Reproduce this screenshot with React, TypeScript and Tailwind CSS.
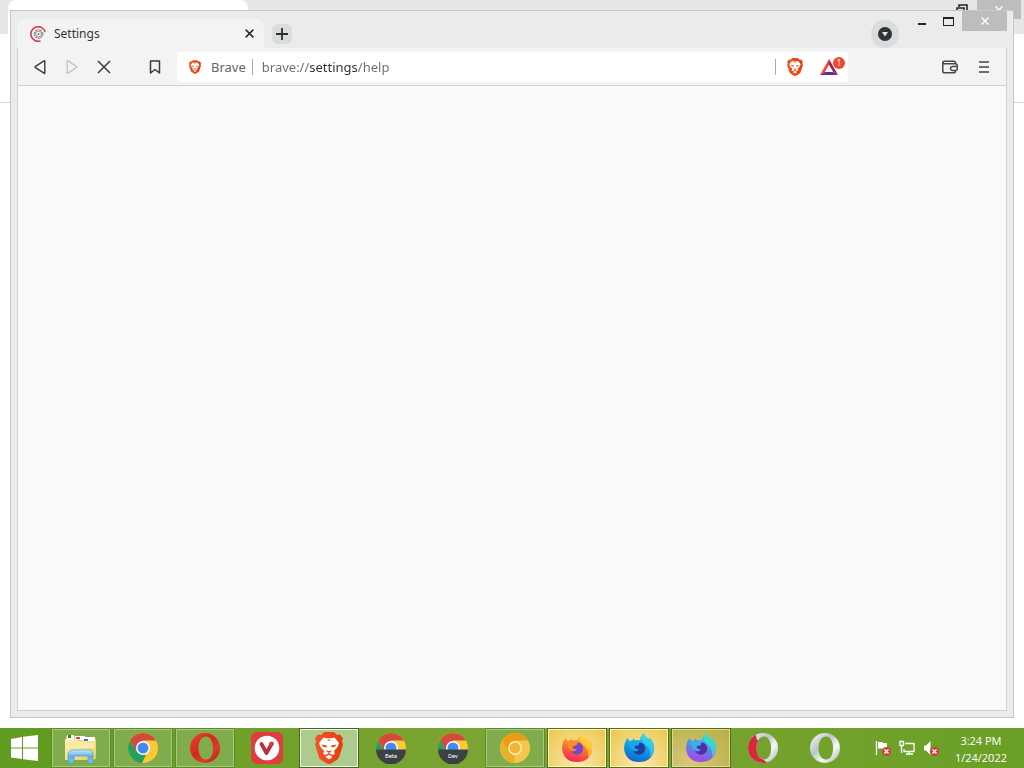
import type { ReactNode } from "react";

const BraveLion = ({ className }: { className: string }) => (
  <svg viewBox="0 0 28 32" className={className} aria-hidden="true">
    <defs>
      <linearGradient id="lion" x1="0" x2="1">
        <stop offset="0" stopColor="#f4552a" />
        <stop offset="1" stopColor="#e63d09" />
      </linearGradient>
    </defs>
    <path fill="url(#lion)" d="M9 0h10l3 3 3-.5 3 4-1 3 1 3-4 13q-1 2-3 3l-5 3q-2 1-4 0l-5-3q-2-1-3-3L0 12.500l1-3-1-3 3-4 3 .5z" />
    <path fill="#fff" d="M8.500 5.500l3 .7h5l3-.7 4.500 5.500-1.500 4-3.500 4 .8 3-2.300 1-3.500-2-3.500 2-2.300-1 .8-3-3.500-4-1.500-4z" />
    <path fill="#ee4a1a" d="M6.500 12.500l5.500 1-.5 2-3.500-.7zM21.500 12.500l-5.500 1 .5 2 3.500-.7zM12 7.500h4l-2 1.500zM11 18.300l3 .8 3-.8-1.500 2-1.500.8-1.500-.8z" />
    <path fill="#fff" d="M10.500 24.800l3.500-2 3.500 2-3.500 2.700z" />
  </svg>
);

const Bat = () => (
  <svg viewBox="0 0 18 16" className="h-4 w-[18px]" aria-hidden="true">
    <path fill="#ff4724" d="M9 0L0 16l5-3 4-7z" />
    <path fill="#9e1f63" d="M9 0l9 16-5-3-4-7z" />
    <path fill="#662d91" d="M0 16h18l-5-3H5z" />
    <path fill="#fff" d="M9 6l-4 7h8z" />
  </svg>
);

const SettingsLoading = () => (
  <svg viewBox="0 0 16 16" className="size-4 shrink-0" fill="none" aria-hidden="true">
    <path d="M10.500 15A7.300 7.300 0 1 1 15.200 6" stroke="#dc3553" strokeWidth="1.600" />
    <circle cx="8.500" cy="8" r="4.300" stroke="#858585" strokeWidth="1.300" strokeDasharray="1.700 1" />
    <circle cx="8.500" cy="8" r="3" stroke="#8d8d8d" />
    <circle cx="8.500" cy="8" r="1" fill="#777" />
  </svg>
);

const BackArrow = () => (
  <svg viewBox="0 0 16 16" className="size-4" fill="none" stroke="currentColor" strokeWidth="1.400" strokeLinejoin="round" aria-hidden="true">
    <path d="M12.800 2v12Q12.800 15 12 14.200L3.500 8.700Q2.700 8 3.500 7.300L12 1.800Q12.800 1.300 12.800 2z" />
  </svg>
);

const Cross = ({ className, w }: { className: string; w: number }) => (
  <svg viewBox="0 0 14 14" className={className} stroke="currentColor" strokeWidth={w} fill="none" aria-hidden="true">
    <path d="M1 1l12 12M13 1L1 13" />
  </svg>
);

const Wallet = () => (
  <svg viewBox="0 0 16 14" className="h-[14px] w-4" fill="none" stroke="#484848" strokeWidth="1.500" strokeLinejoin="round" aria-hidden="true">
    <path d="M13.500 3.800V3q0-1.800-1.800-1.800H2Q.8 1.200.8 2.500V11q0 1.800 1.700 1.800h9.200q1.800 0 1.800-1.800M1 2.500q.3 1.300 1.500 1.300h10.700q2 0 2 2v3.400q0 1.300-1.300 1.300h-3.500q-2-.3-2-2t2-2h4.500" />
  </svg>
);

const Explorer = () => (
  <svg viewBox="0 0 36 32" className="h-8 w-9" aria-hidden="true">
    <defs>
      <linearGradient id="folder" x1="0" y1="0" x2="1" y2="1">
        <stop stopColor="#fff4bd" />
        <stop offset="1" stopColor="#e9cb63" />
      </linearGradient>
      <linearGradient id="stand" x1="0" y1="0" x2="0" y2="1">
        <stop stopColor="#c4ebfb" />
        <stop offset=".5" stopColor="#58b0e5" />
        <stop offset="1" stopColor="#7ac6ec" />
      </linearGradient>
    </defs>
    <path fill="#e0c774" d="M3 4h11l2 3h17v20H3z" />
    <path fill="#fff" d="M4 3h7v4H4zM12 4h10v4H12zM22 5h10v4H22z" />
    <path fill="#268b38" d="M5 3h3v3H5z" />
    <path fill="#d64835" d="M13 5h4v2h-4z" />
    <path fill="#3976c9" d="M21 7h4v2h-4z" />
    <path fill="url(#folder)" d="M2 7h10l3 2h18v16l-2 3H2z" />
    <path fill="#f9eaa4" d="M2 11h29v5H2z" />
    <path fill="url(#stand)" stroke="#3f93ca" strokeWidth=".6" d="M8 18h20l2 3v10h-5v-7H11v7H5V21z" />
  </svg>
);

const ChromeFace = () => (
  <>
    <circle cx="16" cy="16" r="15" fill="#fbc934" />
    <path fill="#d44a3c" d="M3 8.500a15 15 0 0 1 26 0H16v4L9.500 19.800z" />
    <path fill="#23a05a" d="M3 8.500l6.500 11.200 9.500 3L15 31A15 15 0 0 1 3 8.500z" />
    <circle cx="16" cy="16" r="7" fill="#fff" />
    <circle cx="16" cy="16" r="5.500" fill="#4587f3" />
  </>
);

const Chrome = ({ label }: { label?: string }) => (
  <svg viewBox="0 0 32 32" className="size-8" aria-hidden="true">
    <ChromeFace />
    {label && (
      <>
        <path fill="#3c4146" d="M1 17.500h30a15 15 0 0 1-30 0z" />
        <text x="16" y="26" textAnchor="middle" fontSize="6" fill="#fff" fontFamily="Roboto, sans-serif">{label}</text>
      </>
    )}
  </svg>
);

const Canary = () => (
  <svg viewBox="0 0 32 32" className="size-8" aria-hidden="true">
    <circle cx="16" cy="16" r="15" fill="#f6c74c" />
    <path fill="#ed9c12" d="M3 8.500a15 15 0 0 1 26 0H16l-6.500 11z" />
    <path fill="#e9b02a" d="M3 8.500l6.500 11.200L16 23l-1 8A15 15 0 0 1 3 8.500z" />
    <circle cx="16" cy="16" r="6.200" fill="#f0b334" stroke="#fff0ba" strokeWidth="1.500" />
  </svg>
);

const OperaRing = ({ kind }: { kind: "red" | "developer" | "beta" }) => (
  <svg viewBox="0 0 32 32" className="size-8" aria-hidden="true">
    <defs>
      <linearGradient id="operaRed" x1="0" y1="0" x2="1" y2="1">
        <stop stopColor="#ee4438" />
        <stop offset=".45" stopColor="#d3271f" />
        <stop offset=".7" stopColor="#e03a2f" />
        <stop offset="1" stopColor="#a61410" />
      </linearGradient>
      <linearGradient id="operaSilver" x1="0" x2="1" y2="1">
        <stop stopColor="#fafafa" />
        <stop offset=".4" stopColor="#b9c5c8" />
        <stop offset=".65" stopColor="#f7f8f8" />
        <stop offset="1" stopColor="#9fadb0" />
      </linearGradient>
      <clipPath id="operaHalf">
        <path d="M0 0h8l2 8h6L12 24l10 8H0z" />
      </clipPath>
    </defs>
    <path
      fillRule="evenodd"
      fill={kind === "red" ? "url(#operaRed)" : "url(#operaSilver)"}
      d="M16 1a15 15 0 1 1 0 30a15 15 0 1 1 0-30zM17 4.500C7 4.500 7 27.500 17 27.500S26 4.500 17 4.500z"
    />
    {kind === "developer" && (
      <path
        fillRule="evenodd"
        fill="#d8293a"
        clipPath="url(#operaHalf)"
        d="M16 1a15 15 0 1 1 0 30a15 15 0 1 1 0-30zM17 4.500C7 4.500 7 27.500 17 27.500S26 4.500 17 4.500z"
      />
    )}
  </svg>
);

const Vivaldi = () => (
  <svg viewBox="0 0 32 32" className="size-8" aria-hidden="true">
    <rect width="32" height="32" rx="6" fill="#e03c3d" />
    <circle cx="16" cy="16" r="12.300" fill="#fff" />
    <path d="M10.500 12l5 9 5-9" stroke="#b93040" strokeWidth="3.800" fill="none" strokeLinecap="round" strokeLinejoin="round" />
    <circle cx="20.500" cy="11.800" r="2.400" fill="#dc3b3e" />
  </svg>
);

const foxes = {
  release: { id: "foxRelease", top: "#ffd23f", mid: "#ff7a2b", end: "#ef295d", tail: "#ffdf3d", core: "#7448cf", brow: "#ff8a26" },
  developer: { id: "foxDeveloper", top: "#20d7f5", mid: "#109ee7", end: "#1269cd", tail: "#45d5ef", core: "#253c9e", brow: "#16a9ea" },
  nightly: { id: "foxNightly", top: "#22d9e7", mid: "#538bed", end: "#aa43e5", tail: "#3de9ca", core: "#532da8", brow: "#3aaeea" },
};

const Firefox = ({ kind }: { kind: keyof typeof foxes }) => {
  const c = foxes[kind];
  return (
    <svg viewBox="0 0 32 32" className="size-8" aria-hidden="true">
      <defs>
        <linearGradient id={c.id} x1=".7" y1="0" x2=".4" y2="1">
          <stop stopColor={c.top} />
          <stop offset=".5" stopColor={c.mid} />
          <stop offset="1" stopColor={c.end} />
        </linearGradient>
      </defs>
      <path fill={`url(#${c.id})`} d="M4.500 6l2 3 3-1L11 6l1 3 5-1q0-4 4-7 1 4 5 6l1-1q5 6 4 12-2 12-15 12T1 17Q1 11 4.500 6z" />
      <path fill={c.tail} d="M21 1q1 4 5 6l1-1q5 6 4 12-1 5-4 7 1-7-3-11-6-5-6-9 1-3 3-4z" opacity=".65" />
      <circle cx="16" cy="16.500" r="6.200" fill={c.core} />
      <path fill={c.brow} d="M5 10l7-1.500q5-1 7 2.500-2-1-3 0 1 3-4 3-1 1 0 2 2 2 4 1-1 3-5 2-4-2-6-9z" />
    </svg>
  );
};

const ErrorBadge = () => (
  <g>
    <circle cx="11.500" cy="11.500" r="4.500" fill="#d23c36" />
    <path d="M9.500 9.500l4 4m0-4l-4 4" stroke="#fff" strokeWidth="1.500" />
  </g>
);

type Look = "idle" | "open" | "active" | "alert" | "mixed";
const looks: Record<Look, string> = {
  idle: "border-transparent",
  open: "border-[#a6ca82] bg-[#80ac4c] outline outline-[#5c8c26]",
  active: "border-[#f2f8e8] bg-[#adcb8d] outline outline-[#46661f]",
  alert: "border-[#fff6b8] bg-radial-[at_50%_100%] from-[#ffe9b0] to-[#e9c850] outline outline-[#5b6a1c]",
  mixed: "border-[#dfdc8a] bg-radial-[at_30%_100%] from-[#dcc680] to-[#b6b043] outline outline-[#5b6a1c]",
};

const apps: { name: string; look: Look; icon: ReactNode }[] = [
  { name: "File Explorer", look: "open", icon: <Explorer /> },
  { name: "Google Chrome", look: "open", icon: <Chrome /> },
  { name: "Opera", look: "open", icon: <OperaRing kind="red" /> },
  { name: "Vivaldi", look: "idle", icon: <Vivaldi /> },
  { name: "Brave", look: "active", icon: <BraveLion className="h-8 w-7" /> },
  { name: "Chrome Beta", look: "idle", icon: <Chrome label="Beta" /> },
  { name: "Chrome Dev", look: "idle", icon: <Chrome label="Dev" /> },
  { name: "Chrome Canary", look: "open", icon: <Canary /> },
  { name: "Firefox", look: "alert", icon: <Firefox kind="release" /> },
  { name: "Firefox Developer Edition", look: "alert", icon: <Firefox kind="developer" /> },
  { name: "Firefox Nightly", look: "mixed", icon: <Firefox kind="nightly" /> },
  { name: "Opera Developer", look: "idle", icon: <OperaRing kind="developer" /> },
  { name: "Opera Beta", look: "idle", icon: <OperaRing kind="beta" /> },
];

const BackWindow = () => (
  <div className="absolute inset-0 flex flex-col bg-white" aria-hidden="true">
    <div className="flex h-[34px] justify-between bg-[#e6e6e6]">
      <div className="ml-2 h-full w-60 rounded-t-lg bg-white" />
      <div className="flex">
        <svg viewBox="0 0 12 12" className="mt-1 mr-[9px] size-3" fill="none" stroke="#222" strokeWidth="1.500">
          <path d="M3 3V1h8v7H9M1 4h7v7H1z" />
        </svg>
        <div className="mr-[3px] flex h-[19px] w-11 items-center justify-center bg-[#bdbdbd] text-white">
          <Cross className="size-2" w={2.4} />
        </div>
      </div>
    </div>
    <div className="h-[69px] border-b border-[#d6d6d6]" />
  </div>
);

const BrowserWindow = () => (
  <div className="relative flex flex-1 flex-col border border-[#c6c6c6] bg-[#ebebeb] px-[6px] pb-[6px]">
    <header className="flex h-[37px] items-start">
      <div className="mt-2 flex h-[29px] w-[247px] items-center rounded-t-lg bg-[#f3f3f3] pr-[7px] pl-[13px]">
        <SettingsLoading />
        <span className="ml-2 flex-1 text-[12px] text-[#333]">Settings</span>
        <button aria-label="Close tab" className="flex size-4 items-center justify-center text-[#2c2c2c]">
          <Cross className="size-[9px]" w={2.4} />
        </button>
      </div>
      <button aria-label="New tab" className="mt-[13px] ml-2 flex size-5 items-center justify-center rounded-md bg-[#d9dcdc]">
        <svg viewBox="0 0 12 12" className="size-3" stroke="#2c2c2c" strokeWidth="1.800" aria-hidden="true">
          <path d="M6 0v12M0 6h12" />
        </svg>
      </button>
      <div className="ml-auto flex">
        <button aria-label="Search tabs" className="mt-[9px] flex size-7 items-center justify-center rounded-full bg-[#d9dcdd]">
          <svg viewBox="0 0 14 14" className="size-[14px]" aria-hidden="true">
            <circle cx="7" cy="7" r="7" fill="#303436" />
            <path d="M4 5h6L7 9.500z" fill="#e5e8e8" />
          </svg>
        </button>
        <div className="flex h-5">
          <button aria-label="Minimize" className="ml-[9px] flex w-[27px] items-center justify-center">
            <span className="mt-[5px] h-[2px] w-2 bg-[#222]" />
          </button>
          <button aria-label="Maximize" className="flex w-[27px] items-center justify-center">
            <span className="h-[9px] w-[11px] border border-t-2 border-[#222]" />
          </button>
          <button aria-label="Close" className="flex w-[45px] items-center justify-center bg-[#bdbdbd] text-white">
            <Cross className="size-2" w={2.4} />
          </button>
        </div>
      </div>
    </header>
    <div className="flex flex-1 flex-col border border-t-0 border-[#d0d0d0]">
      <nav className="flex h-[38px] items-center border-b border-[#cfd2d4] bg-[#f3f3f3] text-[#3c3c3c]">
        <button aria-label="Back" className="ml-[14px]"><BackArrow /></button>
        <button aria-label="Forward" disabled className="ml-4 rotate-180 text-[#c6c6c6]"><BackArrow /></button>
        <button aria-label="Stop" className="ml-[17px]"><Cross className="size-[14px]" w={1.5} /></button>
        <button aria-label="Bookmark" className="ml-[38px]">
          <svg viewBox="0 0 12 14" className="h-[14px] w-3" fill="none" stroke="currentColor" strokeWidth="1.500" strokeLinejoin="round" aria-hidden="true">
            <path d="M1.500 1h9v12L6 9.500 1.500 13z" />
          </svg>
        </button>
        <div className="ml-4 flex h-[30px] flex-1 items-center rounded bg-white pr-[3px] pl-3">
          <BraveLion className="h-[14px] w-3" />
          <label htmlFor="address" className="ml-[10px] pt-[2px] text-[13px] text-[#666]">Brave</label>
          <span className="ml-[6px] h-4 w-px bg-[#a8a8a8]" />
          <input
            id="address"
            defaultValue="brave://settings/help"
            className="ml-[9px] min-w-0 flex-1 bg-[linear-gradient(90deg,#6c6c6c_48px,#2f2f2f_48px,#2f2f2f_96px,#6c6c6c_96px)] bg-clip-text pt-[2px] text-[13px] text-transparent caret-[#333] outline-none"
          />
          <span className="h-4 w-px bg-[#a8a8a8]" />
          <button aria-label="Brave Shields" className="ml-[11px]"><BraveLion className="h-[18px] w-4" /></button>
          <button aria-label="Brave Rewards" className="relative mr-[7px] ml-[17px]">
            <Bat />
            <span className="absolute -top-[2px] -right-[7px] flex size-3 items-center justify-center rounded-full bg-[#f5472f] text-[8px] text-white">1</span>
          </button>
        </div>
        <button aria-label="Wallet" className="ml-[94px]"><Wallet /></button>
        <button aria-label="Menu" className="mr-[17px] ml-[21px]">
          <svg viewBox="0 0 10 12" className="h-3 w-[10px]" stroke="#454545" strokeWidth="1.500" aria-hidden="true">
            <path d="M0 1h10M0 6h10M0 11h10" />
          </svg>
        </button>
      </nav>
      <main className="flex-1 bg-[#f9fafc]" />
    </div>
  </div>
);

const Taskbar = () => (
  <footer className="flex h-10 items-center bg-linear-to-r from-[#5f9c20] via-[#7ea534] to-[#6a9f25] text-white">
    <button aria-label="Start" className="mr-1 flex h-full w-12 items-center justify-center">
      <svg viewBox="0 0 27 26" className="h-[26px] w-[27px]" fill="#fff" aria-hidden="true">
        <path d="M0 4l11-2v10.500H0zM12 1.800L27 0v12.500H12zM0 13.500h11V24L0 22.500zM12 13.500h15V26l-15-1.800z" />
      </svg>
    </button>
    <div className="flex h-full items-center gap-1 py-px">
      {apps.map((app) => (
        <button key={app.name} aria-label={app.name} className={`flex h-full w-[58px] items-center justify-center border ${looks[app.look]}`}>
          {app.icon}
        </button>
      ))}
    </div>
    <div className="ml-auto flex items-center gap-2 pr-[17px]">
      <button aria-label="Action Center">
        <svg viewBox="0 0 16 16" className="size-4" aria-hidden="true">
          <path d="M1.500 1v14" stroke="#fff" strokeWidth="1.300" />
          <path d="M3 2h4l1 1h4v6H8L7 8.500H3z" fill="#fff" />
          <ErrorBadge />
        </svg>
      </button>
      <button aria-label="Network">
        <svg viewBox="0 0 16 16" className="size-4" fill="none" stroke="#fff" strokeWidth="1.300" aria-hidden="true">
          <path d="M6 3.500h9v8H5V9M10 12v2M7 14h7M2.500 6v7M1 1.500h3.500v4H1z" />
        </svg>
      </button>
      <button aria-label="Volume muted">
        <svg viewBox="0 0 16 16" className="size-4" aria-hidden="true">
          <path d="M1 5.500h2L7.500 1v14L3 10.500H1z" fill="#fff" />
          <ErrorBadge />
        </svg>
      </button>
      <time className="ml-2 pt-px text-center font-['Open_Sans',sans-serif] text-[11px] leading-[17px]">
        <span className="block">3:24 PM</span>
        <span className="block">1/24/2022</span>
      </time>
    </div>
  </footer>
);

export default function App() {
  return (
    <div className="flex min-h-screen flex-col bg-white font-['Noto_Sans','Open_Sans',sans-serif]">
      <div className="relative flex flex-1 flex-col p-[10px]">
        <BackWindow />
        <BrowserWindow />
      </div>
      <Taskbar />
    </div>
  );
}
